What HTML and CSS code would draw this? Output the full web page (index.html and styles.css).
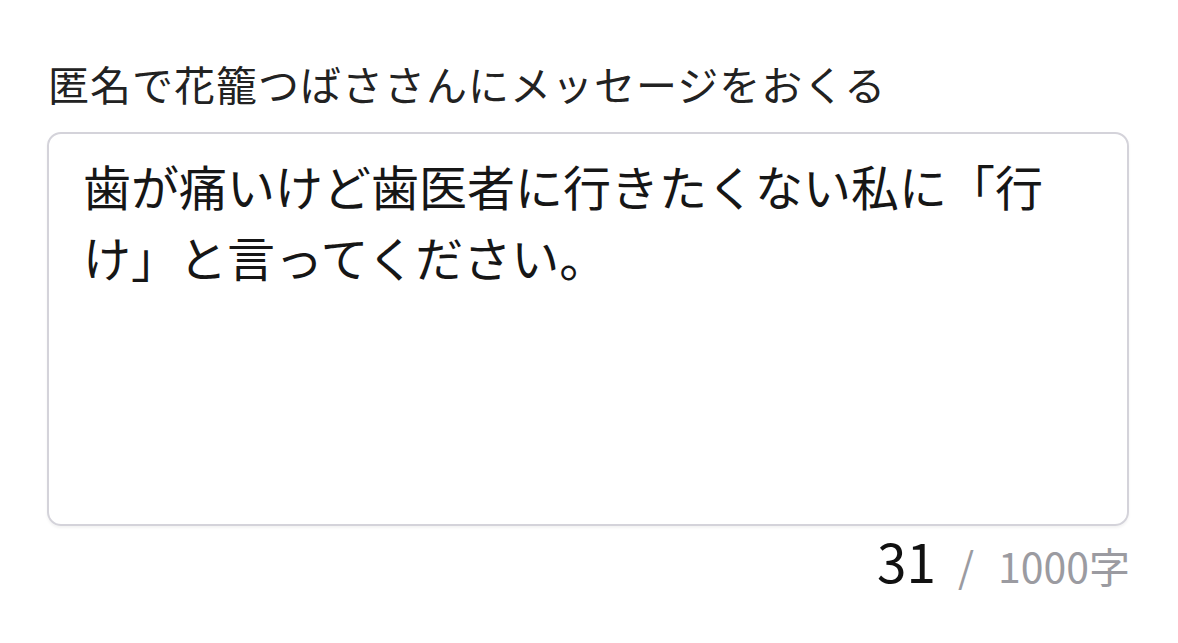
FILE: index.html
```html
<!DOCTYPE html>
<html lang="ja">
  <head>
    <meta charset="UTF-8" />
    <meta name="viewport" content="width=device-width, initial-scale=1.0" />
    <title>匿名メッセージ</title>
    <link rel="stylesheet" href="styles.css">
  </head>
  <body>
    <div class="container">
      <label class="title" for="message">匿名で花籠つばささんにメッセージをおくる</label>
      <div class="message-box" id="message">歯が痛いけど歯医者に行きたくない私に「行け」と言ってください。</div>
      <div class="count">
        <span class="num">31</span>
        <span class="max"><span class="slash">/</span>1000字</span>
      </div>
    </div>
  </body>
</html>
```

FILE: styles.css
```css
* {
  margin: 0;
  padding: 0;
  box-sizing: border-box;
}
body {
  background-color: #fff;
  color: #1b1b1b;
  font-family: "Noto Sans CJK JP", "Noto Sans", sans-serif;
}
.container {
  width: 1178px;
  padding: 59px 49px 0 47px;
  display: flex;
  flex-direction: column;
}
.title {
  display: block;
  font-size: 41px;
  line-height: 48px;
  letter-spacing: 1px;
  padding-left: 1px;
  color: #222;
}
.message-box {
  margin-top: 25px;
  height: 394px;
  border: 2px solid #d4d3da;
  border-radius: 14px;
  box-shadow: 0 2px 3px rgba(0, 0, 0, 0.05);
  padding: 16px 58px 0 34px;
  font-size: 48px;
  line-height: 71px;
  color: #161616;
}
.count {
  display: flex;
  justify-content: flex-end;
  align-items: baseline;
  margin-top: -4px;
  margin-right: -1px;
}
.num {
  font-size: 53px;
  color: #111;
}
.max {
  font-size: 41px;
  color: #9b9ba1;
  margin-left: 22px;
}
.slash {
  margin-right: 24px;
}
```
